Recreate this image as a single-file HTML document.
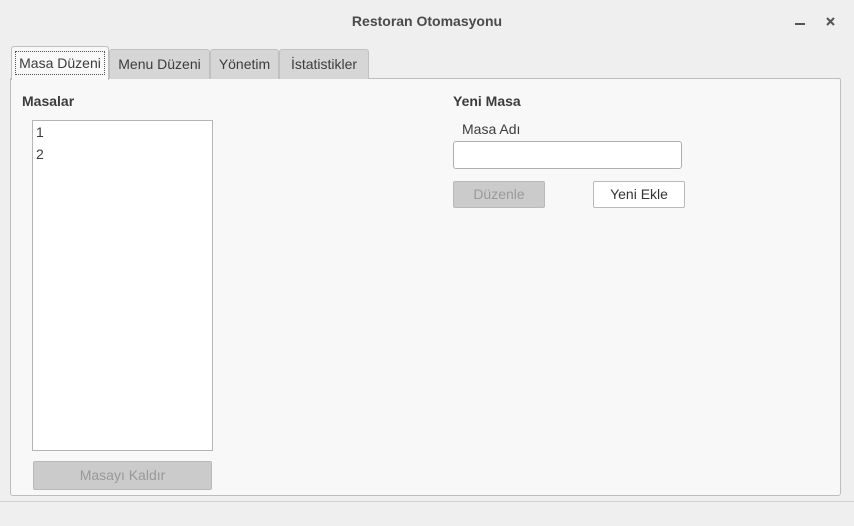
<!DOCTYPE html>
<html><head><meta charset="utf-8"><style>
*{box-sizing:border-box;margin:0;padding:0}
body{width:854px;height:526px;background:#efefef;font-family:"Liberation Sans","DejaVu Sans",sans-serif;color:#3c3c3c;position:relative;overflow:hidden;font-size:14px}
.a{position:absolute}
.title{left:0;width:854px;top:13px;text-align:center;font-weight:bold;font-size:14px;color:#4a4a4a}
.tab{top:49px;height:30px;background:#d6d6d6;border:1px solid #c0c0c0;border-bottom:none;border-radius:3px 3px 0 0;font-size:14px;line-height:28px;text-align:center;color:#3c3c3c}
.panel{left:10px;top:78px;width:831px;height:418px;background:#f8f8f8;border:1px solid #bdbdbd;border-radius:0 2px 3px 3px}
.btn{height:27px;border:1px solid #b9b9b9;border-radius:2px;text-align:center;line-height:25px;font-size:14px}
</style></head><body>
<div class="a title">Restoran Otomasyonu</div>
<div class="a" style="left:795px;top:23px;width:10px;height:2px;background:#555"></div>
<svg class="a" style="left:826px;top:17px" width="9" height="9" viewBox="0 0 9 9"><path d="M1 1L8 8M8 1L1 8" stroke="#555" stroke-width="2"/></svg>
<div class="a panel"></div>
<div class="a tab" style="left:11px;top:46px;width:98px;height:34px;background:#f8f8f8;z-index:2">
 <div style="margin:4px 3px 0;border:1px dotted #555;line-height:22px;height:24px">Masa Düzeni</div></div>
<div class="a tab" style="left:109px;width:101px">Menu Düzeni</div>
<div class="a tab" style="left:210px;width:69px">Yönetim</div>
<div class="a tab" style="left:279px;width:90px">İstatistikler</div>
<div class="a" style="left:22px;top:93px;font-weight:bold">Masalar</div>
<div class="a" style="left:32px;top:120px;width:181px;height:331px;background:#fff;border:1px solid #b5b5b5;padding:0 3px;line-height:22px">1<br>2</div>
<div class="a btn" style="left:33px;top:461px;width:179px;height:29px;line-height:27px;background:#cbcbcb;color:#999">Masayı Kaldır</div>
<div class="a" style="left:453px;top:93px;font-weight:bold">Yeni Masa</div>
<div class="a" style="left:462px;top:121px">Masa Adı</div>
<div class="a" style="left:453px;top:141px;width:229px;height:28px;background:#fff;border:1px solid #b0b0b0;border-radius:3px"></div>
<div class="a btn" style="left:453px;top:181px;width:92px;background:#cbcbcb;color:#9a9a9a">Düzenle</div>
<div class="a btn" style="left:593px;top:181px;width:92px;background:#fff;color:#333">Yeni Ekle</div>
<div class="a" style="left:0;top:501px;width:854px;height:1px;background:#d0d0d0"></div>
</body></html>
